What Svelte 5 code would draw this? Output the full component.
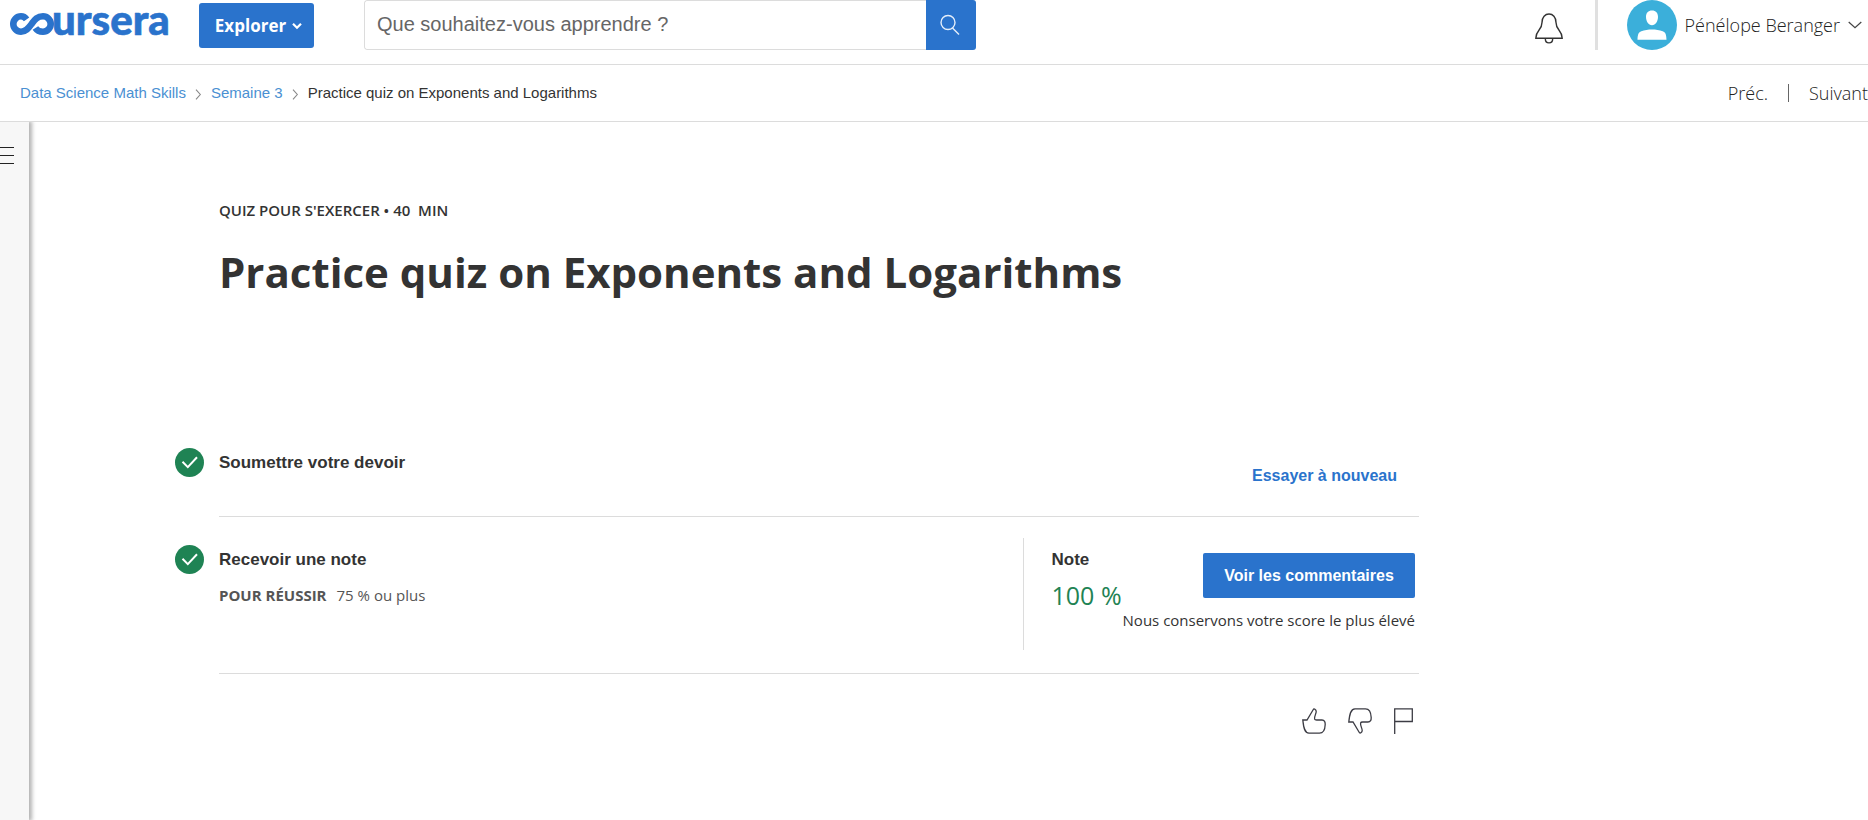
<script>
  let query = $state('');
  const crumbs = ['Data Science Math Skills', 'Semaine 3'];
</script>

{#snippet check()}
  <svg class="check" viewBox="0 0 29 29" aria-hidden="true">
    <circle cx="14.5" cy="14.5" r="14.5" fill="#1f8354" />
    <path d="M7.5 13.8l5.3 5.3 9.2-9.8" fill="none" stroke="#fff" stroke-width="2" />
  </svg>
{/snippet}

<div class="page">
  <header class="top">
    <a class="logo" href="#home" aria-label="coursera">
      <svg viewBox="0 0 160 50" width="160" height="50" aria-hidden="true">
        <path
          d="M16.600 19.400C15 17.200 13.200 16.300 11 16.300A7.700 7.700 0 0 0 11 31.700C16 31.700 18.600 28 21.600 24C24.600 20 27 16.300 33 16.300A7.700 7.700 0 0 1 33 31.700C29.500 31.700 27 30.500 25.400 28"
          fill="none"
          stroke="#2a73cc"
          stroke-width="6.600"
        />
        <text x="42" y="34.500">ursera</text>
      </svg>
    </a>
    <button class="explore" type="button">
      Explorer
      <svg width="10" height="8" viewBox="0 0 10 8" aria-hidden="true"><path d="M1 1.7l4 4 4-4" fill="none" stroke="#fff" stroke-width="2.2" /></svg>
    </button>
    <form class="search" role="search" onsubmit={(e) => e.preventDefault()}>
      <input type="text" aria-label="Rechercher" placeholder="Que souhaitez-vous apprendre ?" bind:value={query} />
      <button type="submit" aria-label="Lancer la recherche">
        <svg width="22" height="22" viewBox="0 0 22 22" fill="none" stroke="#e4eefa" stroke-width="1.4" aria-hidden="true">
          <circle cx="8" cy="8.500" r="7" /><path d="M12.500 14l6.500 6.500" />
        </svg>
      </button>
    </form>
    <div class="account">
      <button class="bell" type="button" aria-label="Notifications">
        <svg width="28" height="31" viewBox="0 0 28 31" fill="none" stroke="#333" stroke-width="1.4" aria-hidden="true">
          <path d="M7 9.500C7 4 10.200 1 14 1s7 3 7 8.500C21 17.500 27.200 17 27.200 25.200H.8C.8 17 7 17.500 7 9.500z" />
          <path d="M10.300 25.400c0 6 7.400 6 7.400 0" />
        </svg>
      </button>
      <span class="bar"></span>
      <button class="user" type="button">
        <svg width="50" height="50" viewBox="0 0 50 50" aria-hidden="true">
          <circle cx="25" cy="25" r="25" fill="#3bafda" />
          <path d="M25 10.500c3.800 0 6 2.300 6 6.300 0 4.600-2.500 8.500-6 8.500s-6-3.900-6-8.500c0-4 2.200-6.300 6-6.300zM10.500 39.800c.2-5.400 1-7.600 3.800-8.500 3.200-1 7-1.700 10.700-1.700s7.500.7 10.700 1.700c2.800.9 3.600 3.100 3.800 8.500z" fill="#fff" />
        </svg>
        <span>Pénélope Beranger</span>
        <svg width="14" height="8" viewBox="0 0 14 8" aria-hidden="true"><path d="M.7 1l6.300 5.800L13.300 1" fill="none" stroke="#444" stroke-width="1.2" /></svg>
      </button>
    </div>
  </header>

  <div class="sub">
    <nav class="crumbs" aria-label="Fil d'Ariane">
      {#each crumbs as crumb}
        <a href="#course">{crumb}</a>
        <svg width="7" height="11" viewBox="0 0 7 11" aria-hidden="true"><path d="M1 .7l4.300 4.800L1 10.300" fill="none" stroke="#888" stroke-width="1.100" /></svg>
      {/each}
      <span>Practice quiz on Exponents and Logarithms</span>
    </nav>
    <nav class="pager" aria-label="Navigation">
      <a href="#prev">Préc.</a>
      <span class="sep"></span>
      <a href="#next">Suivant</a>
    </nav>
  </div>

  <div class="body">
    <aside>
      <button class="menu" type="button" aria-label="Ouvrir le menu"><i></i><i></i><i></i></button>
    </aside>
    <main>
      <p class="eyebrow">Quiz pour s'exercer • 40 &nbsp;min</p>
      <h1>Practice quiz on Exponents and Logarithms</h1>

      <section class="step submit">
        {@render check()}
        <h2>Soumettre votre devoir</h2>
        <button class="retry" type="button">Essayer à nouveau</button>
      </section>

      <section class="step grade">
        {@render check()}
        <div class="pass">
          <h2>Recevoir une note</h2>
          <p><strong>Pour réussir</strong><span>75 % ou plus</span></p>
        </div>
        <div class="result">
          <div class="score">
            <h2>Note</h2>
            <p>100 %</p>
          </div>
          <div class="feedback">
            <button class="primary" type="button">Voir les commentaires</button>
            <p>Nous conservons votre score le plus élevé</p>
          </div>
        </div>
      </section>

      <div class="react">
        <button type="button" aria-label="J'aime">
          <svg width="24" height="26" viewBox="0 0 24 26"><path d="M.8 12H5L11.300 1.500C12 .3 14 1.300 14.200 3.400C14.400 5.500 12 8.500 12.600 11C13 12.300 14 12 15.500 12H20C22.500 12 23.300 14 23.200 16.500C23 21.500 21 25.200 17.500 25.200H7C2.500 25.200 1.500 19 .8 12z" /></svg>
        </button>
        <button type="button" aria-label="Je n'aime pas">
          <svg width="24" height="26" viewBox="0 0 24 26"><path d="M.8 14H5L11.300 24.500C12 25.700 14 24.700 14.200 22.600C14.400 20.500 12 17.500 12.600 15C13 13.700 14 14 15.500 14H20C22.500 14 23.300 12 23.200 9.500C23 4.500 21 .8 17.500 .8H7C2.500 .8 1.500 7 .8 14z" /></svg>
        </button>
        <button type="button" aria-label="Signaler">
          <svg width="19" height="26" viewBox="0 0 19 26"><path d="M.7 26V.8H18.300V13.500H.7" /></svg>
        </button>
      </div>
    </main>
  </div>
</div>

<style>
  :global(body) {
    margin: 0;
    background: #fff;
    overflow-x: hidden;
  }
  .page {
    --blue: #2a73cc;
    display: flex;
    flex-direction: column;
    min-height: 100vh;
    overflow: hidden;
    font-family: 'Open Sans', sans-serif;
    color: #333;
  }
  button, input {
    font: inherit;
    color: inherit;
    margin: 0;
    padding: 0;
    border: 0;
    background: none;
  }
  button { cursor: pointer; }
  a { text-decoration: none; }
  h1, h2, p { margin: 0; }
  svg { display: block; flex: none; }

  .top {
    display: flex;
    align-items: flex-start;
    height: 64px;
    border-bottom: 1px solid #dcdcdc;
  }
  .logo { margin-left: 10px; }
  .logo svg { overflow: visible; }
  .logo text {
    font: 900 42px Lato, sans-serif;
    fill: #2a73cc;
    stroke: #2a73cc;
    stroke-width: 0.6;
  }
  .explore {
    display: flex;
    align-items: center;
    justify-content: center;
    gap: 6px;
    box-sizing: border-box;
    width: 115px;
    height: 45px;
    margin: 3px 50px 0 29px;
    padding-left: 4px;
    border-radius: 3px;
    background: var(--blue);
    color: #fff;
    font-size: 17px;
    font-weight: 700;
  }
  .search {
    display: flex;
    flex: 0 1 612px;
    height: 50px;
    border-radius: 3px;
    overflow: hidden;
  }
  .search input {
    flex: 1;
    min-width: 0;
    box-sizing: border-box;
    padding: 0 12px 2px;
    border: 1px solid #dcdcdc;
    border-right: 0;
    border-radius: 3px 0 0 3px;
    font: 20px 'Liberation Sans', Arial, sans-serif;
  }
  .search input::placeholder { color: #666; opacity: 1; }
  .search button {
    display: grid;
    place-items: center;
    width: 50px;
    background: var(--blue);
  }
  .account {
    display: flex;
    align-items: center;
    height: 50px;
    margin-left: auto;
    padding-right: 6px;
  }
  .bell { padding-top: 6px; }
  .bar {
    width: 3px;
    height: 50px;
    margin: 0 29px 0 32px;
    background: #e0e0e0;
  }
  .user {
    display: flex;
    align-items: center;
    gap: 8px;
    font-size: 18px;
    font-weight: 300;
    color: #222;
    white-space: nowrap;
  }

  .sub {
    display: flex;
    align-items: center;
    justify-content: space-between;
    height: 56px;
    border-bottom: 1px solid #dcdcdc;
    white-space: nowrap;
  }
  .crumbs {
    display: flex;
    align-items: center;
    gap: 9px;
    padding: 0 0 2px 20px;
    font: 15px 'Liberation Sans', Arial, sans-serif;
  }
  .crumbs svg { margin-top: 4px; }
  .crumbs a { color: #4a90d2; }
  .pager {
    display: flex;
    align-items: center;
    gap: 20px;
    font-size: 18px;
    font-weight: 300;
  }
  .pager a { color: #222; }
  .sep { width: 1px; height: 18px; background: #666; }

  .body { display: flex; flex: 1; overflow: hidden; }
  aside {
    width: 29px;
    background: #f7f7f7;
    box-shadow: 2px 0 4px 1px rgba(0, 0, 0, 0.3);
  }
  .menu {
    display: flex;
    flex-direction: column;
    gap: 7px;
    margin-top: 25px;
  }
  .menu i { width: 14px; height: 1px; background: #222; }

  main {
    flex: 0 1 1200px;
    margin: 0 40px 0 190px;
    padding-top: 77px;
  }
  .eyebrow {
    font-size: 15px;
    line-height: 22px;
    font-weight: 600;
    text-transform: uppercase;
  }
  h1 {
    margin-top: 21px;
    font-size: 42px;
    line-height: 60px;
    font-weight: 700;
  }
  h2 {
    font: 700 17px/24px 'Liberation Sans', Arial, sans-serif;
  }
  .step {
    display: flex;
    align-items: flex-start;
    box-sizing: border-box;
    border-bottom: 1px solid #dcdcdc;
  }
  .check {
    width: 29px;
    height: 29px;
    margin: -3px 15px 0 -44px;
  }
  .submit {
    height: 96px;
    margin-top: 119px;
    padding: 30px 22px 0 0;
  }
  .retry {
    margin: 13px 0 0 auto;
    color: var(--blue);
    font: 700 16px/24px 'Liberation Sans', Arial, sans-serif;
  }
  .grade {
    height: 157px;
    padding-top: 31px;
  }
  .pass p {
    display: flex;
    gap: 10px;
    margin-top: 12px;
    font-size: 15px;
    line-height: 22px;
    color: #555;
  }
  .pass strong { text-transform: uppercase; }
  .result {
    display: flex;
    box-sizing: border-box;
    height: 112px;
    margin: -10px 4px 0 auto;
    padding: 10px 0 0 28px;
    border-left: 1px solid #dcdcdc;
  }
  .score p {
    margin-top: 7px;
    font-size: 25px;
    line-height: 32px;
    color: #1f8354;
  }
  .feedback {
    display: flex;
    flex-direction: column;
    align-items: flex-end;
    padding: 5px 0 0 1px;
    font-size: 15px;
    line-height: 22px;
    white-space: nowrap;
  }
  .primary {
    width: 212px;
    height: 45px;
    margin-bottom: 11px;
    border-radius: 2px;
    background: var(--blue);
    color: #fff;
    font: 700 16px 'Liberation Sans', Arial, sans-serif;
  }
  .react {
    display: flex;
    justify-content: flex-end;
    gap: 22px;
    padding: 34px 6px 40px 0;
  }
  .react svg { fill: none; stroke: #3c3c44; stroke-width: 1.3; }
</style>
